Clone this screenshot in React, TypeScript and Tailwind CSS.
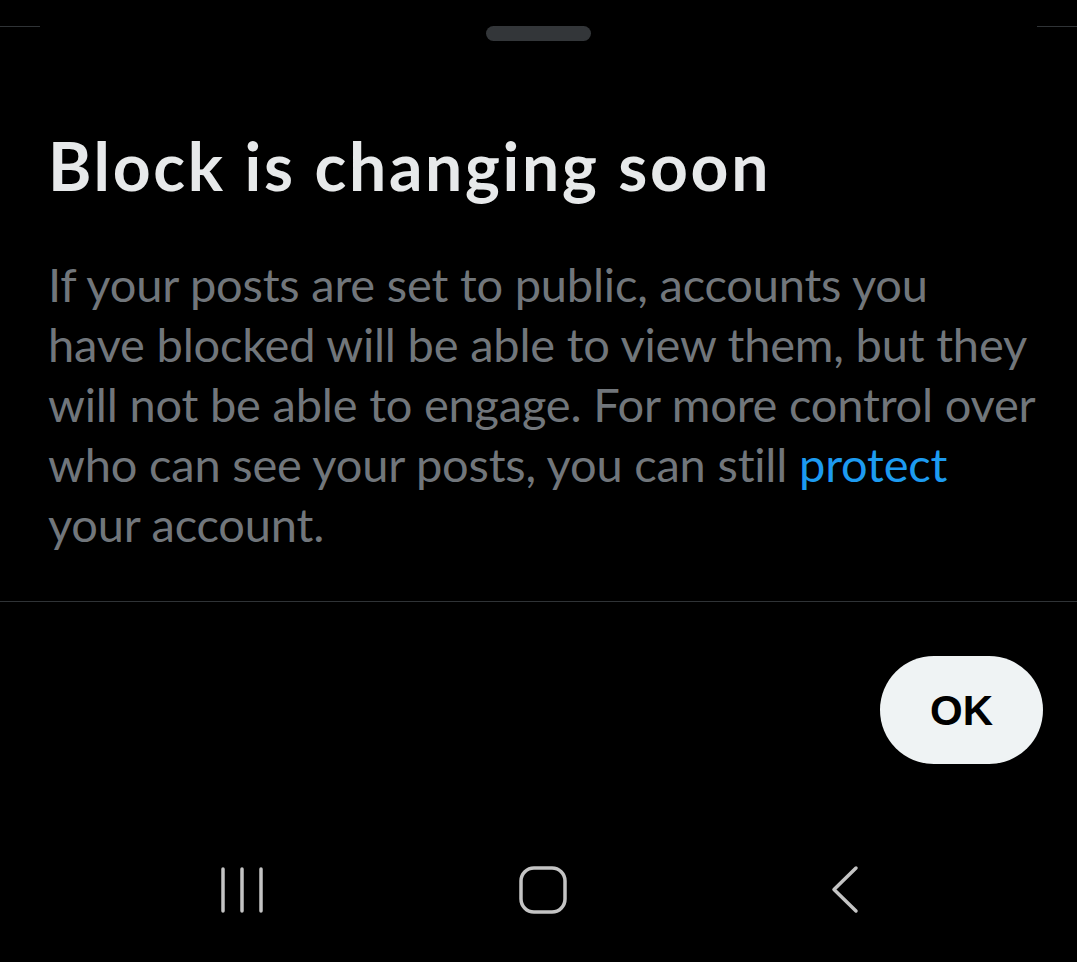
export default function App() {
  return (
    <div
      className="relative w-[1077px] h-[962px] overflow-hidden bg-black"
      style={{ fontFamily: "Lato, 'Noto Sans', sans-serif" }}
    >
      {/* sheet top edge + drag handle */}
      <div className="flex items-start pt-[26px]">
        <div className="w-[40px] h-px bg-[#2f3336]" />
        <div className="flex flex-1 justify-center">
          <div className="w-[105px] h-[15px] rounded-full bg-[#333639]" />
        </div>
        <div className="w-[40px] h-px bg-[#2f3336]" />
      </div>

      <div className="pl-[48px] pr-[20px]">
        <h1 className="mt-[85px] text-[66px] leading-[80px] font-bold text-[#e7e9ea] tracking-[2.7px]">
          Block is changing soon
        </h1>
        <p className="mt-[48px] text-[47px] leading-[60px] text-[#71767b] tracking-[-0.2px] whitespace-nowrap">
          If your posts are set to public, accounts you
          <br />
          have blocked will be able to view them, but they
          <br />
          will not be able to engage. For more control over
          <br />
          who can see your posts, you can still <span className="text-[#1d9bf0]">protect</span>
          <br />
          your account.
        </p>
      </div>

      <div className="mt-[47px] h-px bg-[#2f3336]" />

      <div className="flex justify-end pr-[34px] pt-[54px]">
        <button
          className="w-[163px] h-[108px] rounded-full bg-[#eff3f4] text-black text-[42px] font-bold"
          style={{ fontFamily: "'Liberation Sans', Arial, sans-serif" }}
        >
          OK
        </button>
      </div>

      {/* android navigation bar */}
      <div className="absolute left-0 right-0 top-[866px] h-[48px] flex items-center">
        <div className="w-[301px] flex justify-end pr-[37px]">
          <svg width="44" height="48" viewBox="0 0 44 48" fill="none" stroke="#c4c4c4" strokeWidth="3.5" strokeLinecap="round">
            <path d="M3 3v42M22 3v42M41 3v42" />
          </svg>
        </div>
        <div className="flex-1 flex justify-center pl-[10px]">
          <svg width="50" height="49" viewBox="0 0 50 49" fill="none" stroke="#c4c4c4" strokeWidth="3.5">
            <rect x="2" y="2" width="44" height="44" rx="13" />
          </svg>
        </div>
        <div className="w-[301px] flex justify-start pl-[54px]">
          <svg width="30" height="50" viewBox="0 0 30 50" fill="none" stroke="#c4c4c4" strokeWidth="3.5" strokeLinecap="round" strokeLinejoin="round">
            <path d="M26 3L4 24.5L26 46" />
          </svg>
        </div>
      </div>
    </div>
  );
}
